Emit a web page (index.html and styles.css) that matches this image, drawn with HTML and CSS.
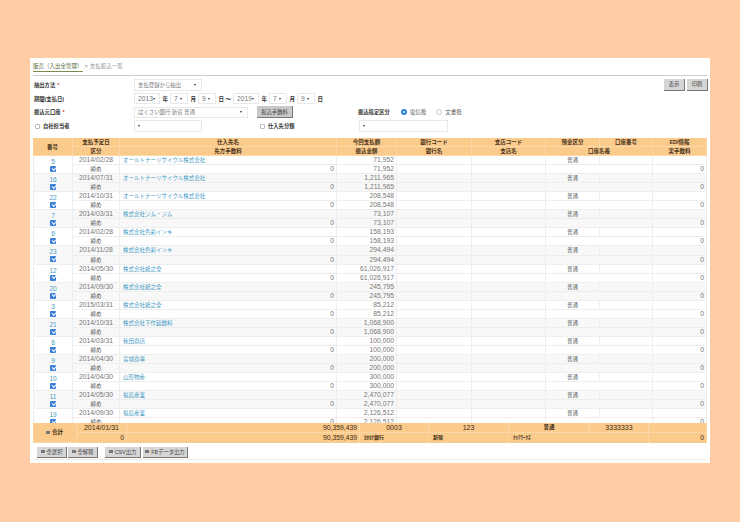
FILE: index.html
```html
<!DOCTYPE html>
<html lang="ja">
<head>
  <meta charset="UTF-8">
  <title>支払振込一覧</title>
  <link rel="stylesheet" href="styles.css">
</head>
<body>
  <div class="card">
    <div class="panel">
    <div class="breadcrumb"><a class="crumb-link">販売（入出金管理）</a><span class="crumb-sep">&gt;</span><span class="crumb-now">支払振込一覧</span></div>

    <div class="filters">
      <div class="filter-row">
        <label class="filter-label">抽出方法 <i class="req">*</i></label>
        <span class="sel sel-method">支払登録から抽出<b class="caret"></b></span>
        <div class="top-buttons">
          <button class="btn">表示</button>
          <button class="btn">印刷</button>
        </div>
      </div>
      <div class="filter-row">
        <label class="filter-label">期間(支払日)</label>
        <span class="sel sel-year">2013<b class="caret"></b></span><span class="unit">年</span>
        <span class="sel sel-num">7<b class="caret"></b></span><span class="unit">月</span>
        <span class="sel sel-num">9<b class="caret"></b></span><span class="unit">日 〜</span>
        <span class="sel sel-year">2019<b class="caret"></b></span><span class="unit">年</span>
        <span class="sel sel-num">7<b class="caret"></b></span><span class="unit">月</span>
        <span class="sel sel-num">9<b class="caret"></b></span><span class="unit">日</span>
      </div>
      <div class="filter-row">
        <label class="filter-label">振込元口座 <i class="req">*</i></label>
        <span class="sel sel-bank">はくさい銀行 新宿 普通<b class="caret"></b></span>
        <button class="btn btn-fee">振込手数料</button>
        <label class="filter-label label-kind">振込指定区分</label>
        <span class="radio radio-on"></span><span class="radio-text">電信扱</span>
        <span class="radio"></span><span class="radio-text">文書扱</span>
      </div>
      <div class="filter-row">
        <label class="filter-label"><span class="box"></span>自社担当者</label>
        <span class="sel sel-method"><b class="caret"></b></span>
        <label class="filter-label label-class"><span class="box"></span>仕入先分類</label>
        <span class="sel sel-class"><b class="caret"></b></span>
      </div>
    </div>

    <table class="list list-head">
      <colgroup><col class="c1"><col class="c2"><col class="c3"><col class="c4"><col class="c5"><col class="c6"><col class="c7"><col class="c8"><col class="c9"></colgroup>
      <tr>
        <th rowspan="2">番号</th><th>支払予定日</th><th>仕入先名</th><th>今回支払額</th><th>銀行コード</th><th>支店コード</th><th>預金区分</th><th>口座番号</th><th>EDI情報</th>
      </tr>
      <tr>
        <th>区分</th><th>先方手数料</th><th>振込金額</th><th>銀行名</th><th>支店名</th><th colspan="2">口座名義</th><th>実手数料</th>
      </tr>
    </table>

    <div class="list-body">
      <table class="list">
        <colgroup><col class="c1"><col class="c2"><col class="c3"><col class="c4"><col class="c5"><col class="c6"><col class="c7"><col class="c8"><col class="c9"></colgroup>
        <tr><td rowspan="2" class="no"><a>5</a><span class="check"></span></td><td class="date">2014/02/28</td><td class="name">オールトナーリサイクル株式会社</td><td class="num">71,952</td><td></td><td></td><td class="ctr">普通</td><td></td><td></td></tr>
        <tr><td class="ctr">締め</td><td class="num">0</td><td class="num">71,952</td><td></td><td></td><td colspan="2"></td><td class="num">0</td></tr>
        <tr class="alt"><td rowspan="2" class="no"><a>16</a><span class="check"></span></td><td class="date">2014/07/31</td><td class="name">オールトナーリサイクル株式会社</td><td class="num">1,211,965</td><td></td><td></td><td class="ctr">普通</td><td></td><td></td></tr>
        <tr class="alt"><td class="ctr">締め</td><td class="num">0</td><td class="num">1,211,965</td><td></td><td></td><td colspan="2"></td><td class="num">0</td></tr>
        <tr><td rowspan="2" class="no"><a>22</a><span class="check"></span></td><td class="date">2014/10/31</td><td class="name">オールトナーリサイクル株式会社</td><td class="num">208,548</td><td></td><td></td><td class="ctr">普通</td><td></td><td></td></tr>
        <tr><td class="ctr">締め</td><td class="num">0</td><td class="num">208,548</td><td></td><td></td><td colspan="2"></td><td class="num">0</td></tr>
        <tr class="alt"><td rowspan="2" class="no"><a>7</a><span class="check"></span></td><td class="date">2014/03/31</td><td class="name">株式会社ジム・ジム</td><td class="num">73,107</td><td></td><td></td><td class="ctr">普通</td><td></td><td></td></tr>
        <tr class="alt"><td class="ctr">締め</td><td class="num">0</td><td class="num">73,107</td><td></td><td></td><td colspan="2"></td><td class="num">0</td></tr>
        <tr><td rowspan="2" class="no"><a>6</a><span class="check"></span></td><td class="date">2014/02/28</td><td class="name">株式会社色彩インキ</td><td class="num">158,193</td><td></td><td></td><td class="ctr">普通</td><td></td><td></td></tr>
        <tr><td class="ctr">締め</td><td class="num">0</td><td class="num">158,193</td><td></td><td></td><td colspan="2"></td><td class="num">0</td></tr>
        <tr class="alt"><td rowspan="2" class="no"><a>23</a><span class="check"></span></td><td class="date">2014/11/28</td><td class="name">株式会社色彩インキ</td><td class="num">294,494</td><td></td><td></td><td class="ctr">普通</td><td></td><td></td></tr>
        <tr class="alt"><td class="ctr">締め</td><td class="num">0</td><td class="num">294,494</td><td></td><td></td><td colspan="2"></td><td class="num">0</td></tr>
        <tr><td rowspan="2" class="no"><a>12</a><span class="check"></span></td><td class="date">2014/05/30</td><td class="name">株式会社紙之全</td><td class="num">61,026,917</td><td></td><td></td><td class="ctr">普通</td><td></td><td></td></tr>
        <tr><td class="ctr">締め</td><td class="num">0</td><td class="num">61,026,917</td><td></td><td></td><td colspan="2"></td><td class="num">0</td></tr>
        <tr class="alt"><td rowspan="2" class="no"><a>20</a><span class="check"></span></td><td class="date">2014/09/30</td><td class="name">株式会社紙之全</td><td class="num">245,795</td><td></td><td></td><td class="ctr">普通</td><td></td><td></td></tr>
        <tr class="alt"><td class="ctr">締め</td><td class="num">0</td><td class="num">245,795</td><td></td><td></td><td colspan="2"></td><td class="num">0</td></tr>
        <tr><td rowspan="2" class="no"><a>3</a><span class="check"></span></td><td class="date">2015/03/31</td><td class="name">株式会社紙之全</td><td class="num">85,212</td><td></td><td></td><td class="ctr">普通</td><td></td><td></td></tr>
        <tr><td class="ctr">締め</td><td class="num">0</td><td class="num">85,212</td><td></td><td></td><td colspan="2"></td><td class="num">0</td></tr>
        <tr class="alt"><td rowspan="2" class="no"><a>21</a><span class="check"></span></td><td class="date">2014/10/31</td><td class="name">株式会社下作延数料</td><td class="num">1,068,900</td><td></td><td></td><td class="ctr">普通</td><td></td><td></td></tr>
        <tr class="alt"><td class="ctr">締め</td><td class="num">0</td><td class="num">1,068,900</td><td></td><td></td><td colspan="2"></td><td class="num">0</td></tr>
        <tr><td rowspan="2" class="no"><a>8</a><span class="check"></span></td><td class="date">2014/03/31</td><td class="name">秋田商店</td><td class="num">100,000</td><td></td><td></td><td class="ctr">普通</td><td></td><td></td></tr>
        <tr><td class="ctr">締め</td><td class="num">0</td><td class="num">100,000</td><td></td><td></td><td colspan="2"></td><td class="num">0</td></tr>
        <tr class="alt"><td rowspan="2" class="no"><a>9</a><span class="check"></span></td><td class="date">2014/04/30</td><td class="name">宮城商事</td><td class="num">200,000</td><td></td><td></td><td class="ctr">普通</td><td></td><td></td></tr>
        <tr class="alt"><td class="ctr">締め</td><td class="num">0</td><td class="num">200,000</td><td></td><td></td><td colspan="2"></td><td class="num">0</td></tr>
        <tr><td rowspan="2" class="no"><a>10</a><span class="check"></span></td><td class="date">2014/04/30</td><td class="name">山形物産</td><td class="num">300,000</td><td></td><td></td><td class="ctr">普通</td><td></td><td></td></tr>
        <tr><td class="ctr">締め</td><td class="num">0</td><td class="num">300,000</td><td></td><td></td><td colspan="2"></td><td class="num">0</td></tr>
        <tr class="alt"><td rowspan="2" class="no"><a>11</a><span class="check"></span></td><td class="date">2014/05/30</td><td class="name">福島産業</td><td class="num">2,470,077</td><td></td><td></td><td class="ctr">普通</td><td></td><td></td></tr>
        <tr class="alt"><td class="ctr">締め</td><td class="num">0</td><td class="num">2,470,077</td><td></td><td></td><td colspan="2"></td><td class="num">0</td></tr>
        <tr><td rowspan="2" class="no"><a>19</a><span class="check"></span></td><td class="date">2014/09/30</td><td class="name">福島産業</td><td class="num">2,126,512</td><td></td><td></td><td class="ctr">普通</td><td></td><td></td></tr>
        <tr><td class="ctr">締め</td><td class="num">0</td><td class="num">2,126,512</td><td></td><td></td><td colspan="2"></td><td class="num">0</td></tr>
      </table>
    </div>

    <table class="list list-total">
      <colgroup><col class="t1"><col class="t2"><col class="t3"><col class="t4"><col class="t5"><col class="t6"><col class="t7"><col class="t8"></colgroup>
      <tr>
        <td rowspan="2" class="ctr total-label"><span class="mini-icon"></span>合計</td>
        <td class="ctr">2014/01/31</td><td class="num">90,359,439</td><td class="ctr">0003</td><td class="ctr">123</td><td class="ctr total-kind">普通</td><td class="ctr">3333333</td><td></td>
      </tr>
      <tr>
        <td class="num">0</td><td class="num">90,359,439</td><td class="kana">ｶﾀｶﾅ銀行</td><td class="kana">新宿</td><td class="kana" colspan="2">ｸﾘｱﾜｰｸｽ</td><td class="num">0</td>
      </tr>
    </table>

    <div class="actions">
      <button class="btn"><span class="mini-icon"></span>全選択</button>
      <button class="btn"><span class="mini-icon"></span>全解除</button>
      <button class="btn btn-gap"><span class="mini-icon"></span>CSV出力</button>
      <button class="btn"><span class="mini-icon"></span>FBデータ出力</button>
    </div>
    </div>
  </div>
</body>
</html>
```

FILE: styles.css
```css
body, html {
  margin: 0;
  padding: 0;
  height: 100%;
  background-color: #FFCCA6;
  font-family: "Liberation Sans", "Noto Sans CJK JP", sans-serif;
  font-size: 6px;
  color: #444;
}

body {
  padding: 58px 30px 0;
  box-sizing: border-box;
}

.card {
  height: 405px;
  background-color: #fff;
  padding: 0 3px 3px;
  box-sizing: border-box;
}

.panel {
  height: 402px;
  box-sizing: border-box;
  border-bottom: 1px solid #eee;
}

.breadcrumb {
  height: 18px;
  border-bottom: 1px solid #ccc;
  padding-top: 3px;
  box-sizing: border-box;
  line-height: 10px;
  color: #999;
  font-size: 5.5px;
}

.crumb-link {
  display: inline-block;
  height: 10px;
  color: #5a6b3c;
  border-bottom: 1px solid #7a8a50;
}

.crumb-sep {
  margin: 0 2px;
  color: #666;
}

.filters {
  height: 62px;
  padding-top: 2px;
  box-sizing: border-box;
}

.filter-row {
  display: flex;
  align-items: center;
  height: 13.75px;
}

.filter-label {
  width: 101px;
  flex: none;
  padding-left: 1px;
  box-sizing: border-box;
  font-weight: bold;
  font-size: 5.3px;
  color: #333;
  display: flex;
  align-items: center;
}

.req {
  color: #d33;
  font-style: normal;
  margin-left: 2px;
}

.sel {
  display: inline-flex;
  align-items: center;
  justify-content: space-between;
  height: 11.5px;
  padding: 0 5px 0 3px;
  box-sizing: border-box;
  border: 1px solid #e8e8e8;
  background-color: #fff;
  color: #777;
  font-size: 5.4px;
  flex: none;
}

.caret {
  width: 0;
  height: 0;
  border-left: 1px solid transparent;
  border-right: 1px solid transparent;
  border-top: 2px solid #333;
}

.sel-method {
  width: 68px;
}

.sel-year {
  width: 26px;
  height: 10.5px;
  font-size: 6.7px;
}

.sel-num {
  width: 18px;
  height: 10.5px;
  font-size: 6.7px;
}

.sel-bank {
  width: 114px;
}

.sel-class {
  width: 89px;
}

.unit {
  margin: 0 2px 0 2.5px;
  color: #333;
  font-weight: bold;
  font-size: 5.5px;
  white-space: nowrap;
}

.top-buttons {
  margin-left: auto;
  display: flex;
  gap: 2px;
  margin-right: -1px;
}

.btn {
  height: 12px;
  padding: 0 3px;
  min-width: 21px;
  font-family: inherit;
  font-size: 5.3px;
  color: #444;
  background-color: #d6d6d6;
  border: none;
  border-right: 1px solid #777;
  border-bottom: 1px solid #777;
  display: inline-flex;
  align-items: center;
  justify-content: center;
  white-space: nowrap;
  flex: none;
}

.btn-fee {
  margin-left: 9px;
  width: 36px;
  background-color: #c9c9c9;
}

.label-kind {
  width: auto;
  margin-left: 64px;
  margin-right: 11px;
}

.label-class {
  width: auto;
  margin-left: 57px;
  margin-right: 64px;
  padding-left: 0;
}

.radio {
  width: 6px;
  height: 6px;
  border-radius: 50%;
  border: 1px solid #ccc;
  background-color: #fff;
  box-sizing: border-box;
  margin-right: 3px;
  flex: none;
}

.radio-on {
  border: 2px solid #2f80d8;
}

.radio-text {
  margin-right: 10px;
  font-size: 5.5px;
  color: #666;
}

.box {
  width: 5px;
  height: 5px;
  border: 1px solid #bbb;
  border-radius: 1px;
  margin: 0 3px 0 1px;
  box-sizing: border-box;
  flex: none;
}

.list {
  width: 674px;
  table-layout: fixed;
  border-collapse: separate;
  border-spacing: 0;
}

.c1 { width: 40px; }
.c2 { width: 47px; }
.c3 { width: 217px; }
.c4 { width: 60px; }
.c5 { width: 75px; }
.c6 { width: 74px; }
.c7 { width: 54px; }
.c8 { width: 53px; }
.c9 { width: 54px; }

.list th {
  height: 9px;
  box-sizing: border-box;
  padding: 0;
  line-height: 8px;
  font-size: 5.5px;
  font-weight: bold;
  color: #4a3420;
  background-color: #FBCB8C;
  border-right: 1px solid #fcd8a8;
  border-bottom: 1px solid #fcd8a8;
}

.list td {
  height: 9.05px;
  box-sizing: border-box;
  padding: 0;
  line-height: 8px;
  font-size: 5.5px;
  color: #555;
  border-right: 1px solid #eee;
  border-bottom: 1px solid #eee;
  overflow: hidden;
  white-space: nowrap;
}

.list-body {
  height: 267px;
  overflow: hidden;
}

.alt td {
  background-color: #f8f8f8;
}

.list td.no {
  text-align: center;
  vertical-align: top;
  color: #3f9bc4;
  font-size: 6.5px;
  border-left: 1px solid #eee;
}

.no a {
  display: block;
  height: 10px;
  line-height: 11px;
}

.check {
  display: block;
  position: relative;
  width: 6px;
  height: 6px;
  margin: 0 auto;
  background-color: #3a80d8;
  border-radius: 1px;
}

.check::after {
  content: "";
  position: absolute;
  left: 1.5px;
  top: 0.8px;
  width: 3px;
  height: 1.5px;
  border-left: 1px solid #fff;
  border-bottom: 1px solid #fff;
  transform: rotate(-45deg);
}

.ctr {
  text-align: center;
}

.list td.date {
  text-align: center;
  font-size: 6.8px;
  color: #777;
}

.list td.name {
  color: #3f9bc4;
  padding-left: 3px;
}

.list td.num {
  text-align: right;
  padding-right: 2px;
  font-size: 6.8px;
  color: #777;
}

.list-total td {
  height: 9.5px;
  background-color: #FBCB8C;
  border-right: 1px solid #fcd8a8;
  border-bottom: 0;
  color: #3a2a14;
  font-size: 7px;
  line-height: 9px;
}

.list-total tr:first-child td {
  border-bottom: 1px solid #fcd8a8;
}

.list-total td.num {
  color: #3a2a14;
}

.list-total td.total-kind {
  font-size: 5.5px;
  font-weight: bold;
}

.list-total td.kana {
  font-size: 5px;
  font-weight: bold;
  padding-left: 4px;
}

.list-total td.total-label {
  font-size: 5.5px;
  font-weight: bold;
  border-bottom: 0;
}

.mini-icon {
  display: inline-block;
  width: 4px;
  height: 3px;
  background-color: #777;
  margin-right: 2px;
  flex: none;
}

.t1 { width: 44px; }
.t2 { width: 50px; }
.t3 { width: 233px; }
.t4 { width: 69px; }
.t5 { width: 80px; }
.t6 { width: 81px; }
.t7 { width: 59px; }
.t8 { width: 58px; }

.actions {
  display: flex;
  gap: 1px;
  padding: 4px 0 0 4px;
}

.actions .btn {
  height: 11px;
  padding: 0;
  width: 30px;
}

.actions .btn-gap {
  margin-left: 6px;
  width: 36px;
}

.actions .btn:last-child {
  width: 45px;
  margin-left: 1px;
}
```
